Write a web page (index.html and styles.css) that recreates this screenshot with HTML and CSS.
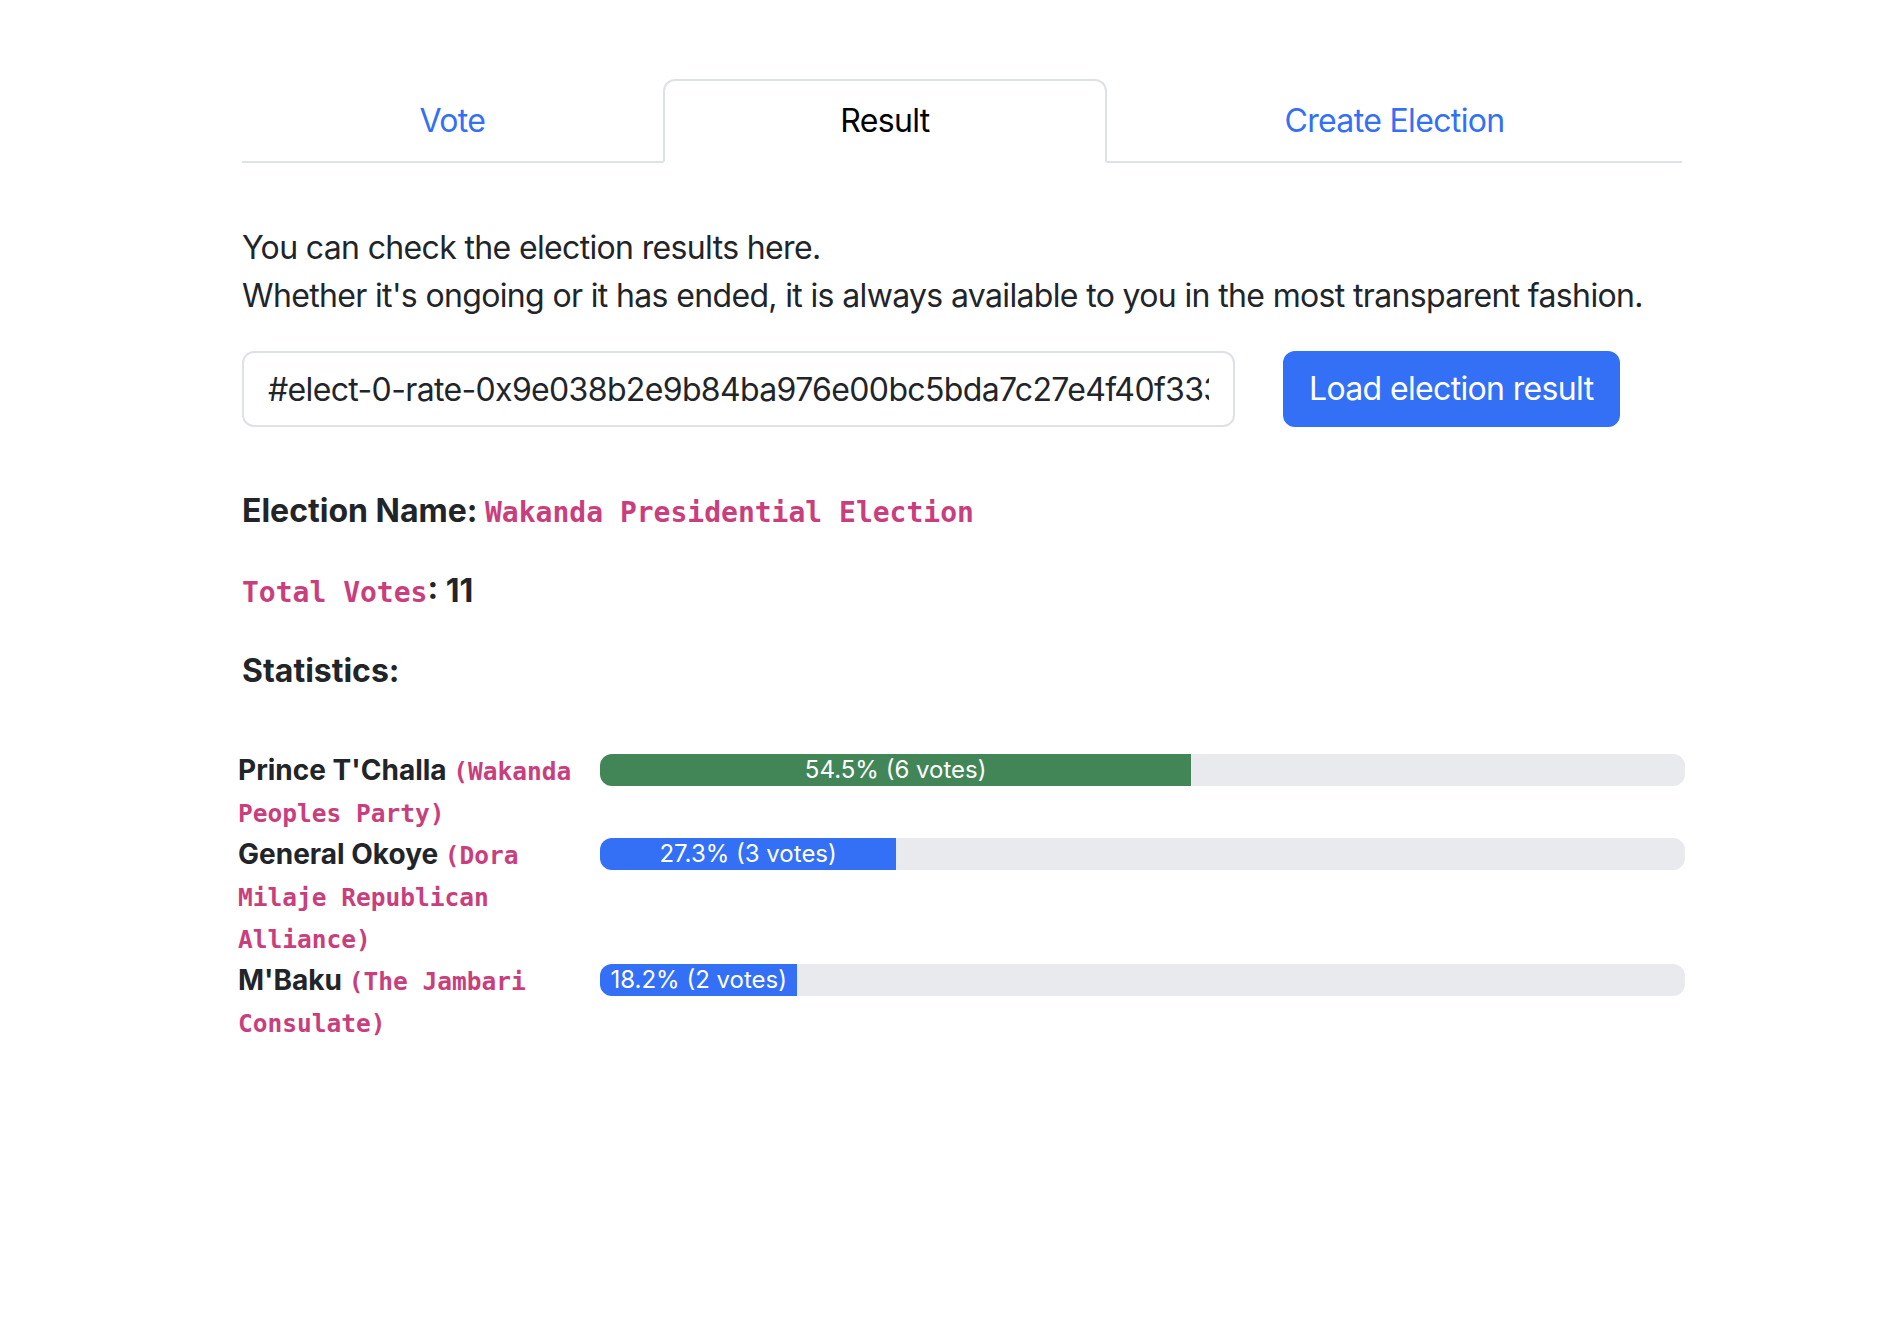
FILE: index.html
```html
<!DOCTYPE html>
<html lang="en">
<head>
<meta charset="utf-8">
<title>Election Result</title>
<link rel="stylesheet" href="styles.css">
</head>
<body>
<div class="page">
  <div class="container">
    <nav class="tabs">
      <a class="tab" href="#">Vote</a>
      <a class="tab active" href="#">Result</a>
      <a class="tab" href="#">Create Election</a>
    </nav>
    <section class="panel">
      <p class="intro">You can check the election results here.<br>Whether it's ongoing or it has ended, it is always available to you in the most transparent fashion.</p>
      <form class="lookup">
        <input class="id-input" type="text" value="#elect-0-rate-0x9e038b2e9b84ba976e00bc5bda7c27e4f40f333a">
        <button class="btn" type="button">Load election result</button>
      </form>
      <p class="meta first"><strong>Election Name: <code>Wakanda Presidential Election</code></strong></p>
      <p class="meta"><strong><code>Total Votes</code>: 11</strong></p>
      <p class="meta"><strong>Statistics:</strong></p>
      <div class="stats">
        <div class="stat-row">
          <div class="cand"><strong>Prince T'Challa <code>(Wakanda Peoples Party)</code></strong></div>
          <div class="progress"><div class="bar green" style="width:54.5%">54.5% (6 votes)</div></div>
        </div>
        <div class="stat-row">
          <div class="cand"><strong>General Okoye <code>(Dora Milaje Republican Alliance)</code></strong></div>
          <div class="progress"><div class="bar blue" style="width:27.3%">27.3% (3 votes)</div></div>
        </div>
        <div class="stat-row">
          <div class="cand"><strong>M'Baku <code>(The Jambari Consulate)</code></strong></div>
          <div class="progress"><div class="bar blue" style="width:18.2%">18.2% (2 votes)</div></div>
        </div>
      </div>
    </section>
  </div>
</div>
</body>
</html>
```
FILE: styles.css
```css
html, body {
  margin: 0;
  padding: 0;
  background: #ffffff;
}

body {
  font-family: Inter, "Noto Sans", "Liberation Sans", sans-serif;
  font-size: 32px;
  line-height: 48px;
  color: #212529;
}

.page {
  padding: 79px 0 120px 242px;
}

.container {
  width: 1440px;
}

.tabs {
  display: flex;
  border-bottom: 2px solid #dee2e6;
}

.tab {
  flex: 1 1 auto;
  text-align: center;
  padding: 16px 32px;
  margin-bottom: -2px;
  border: 2px solid transparent;
  border-radius: 12px 12px 0 0;
  color: #3370f5;
  text-decoration: none;
  line-height: 48px;
  letter-spacing: -0.65px;
}

.tab.active {
  color: #000000;
  background: #ffffff;
  border-color: #dee2e6 #dee2e6 #ffffff;
}

.panel {
  padding-top: 61px;
}

.intro {
  margin: 0 0 31px;
  letter-spacing: -0.65px;
}

.lookup {
  display: flex;
  gap: 48px;
  margin: 0;
}

.id-input {
  width: 993px;
  height: 76px;
  box-sizing: border-box;
  padding: 12px 24px;
  border: 2px solid #dee2e6;
  border-radius: 12px;
  font-family: inherit;
  font-size: 32px;
  line-height: 48px;
  letter-spacing: -0.65px;
  color: #212529;
  background: #ffffff;
  outline: none;
}

.btn {
  height: 76px;
  box-sizing: border-box;
  padding: 12px 24px;
  border: 2px solid #3370f5;
  border-radius: 12px;
  background: #3370f5;
  color: #ffffff;
  font-family: inherit;
  font-size: 32px;
  line-height: 48px;
  letter-spacing: -0.65px;
  cursor: pointer;
}

.meta {
  margin: 0 0 32px;
}

.meta.first {
  margin-top: 60px;
}

strong {
  font-weight: 700;
}

code {
  font-family: "DejaVu Sans Mono", "Liberation Mono", monospace;
  font-size: 0.875em;
  line-height: 1;
  letter-spacing: 0;
  color: #c93f7e;
}

.stats {
  margin: 54px -3px 0 -4px;
  display: flex;
  flex-direction: column;
}

.stat-row {
  display: flex;
  align-items: flex-start;
}

.cand {
  width: 362px;
  flex-shrink: 0;
  box-sizing: border-box;
  padding-right: 10px;
  font-size: 28px;
  line-height: 42px;
}

.progress {
  flex: 1 1 auto;
  height: 32px;
  margin-top: 5px;
  background: #e9eaee;
  border-radius: 12px;
  overflow: hidden;
  display: flex;
}

.bar {
  height: 32px;
  color: #ffffff;
  font-size: 24px;
  line-height: 32px;
  text-align: center;
  white-space: nowrap;
}

.bar.green {
  background: #428657;
}

.bar.blue {
  background: #3370f5;
}
```
